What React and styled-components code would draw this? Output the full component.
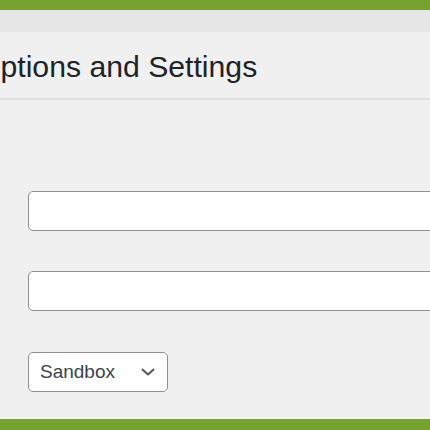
import React from "react";
import styled, { createGlobalStyle } from "styled-components";

const GlobalStyle = createGlobalStyle`
  html, body {
    margin: 0;
    padding: 0;
    background: #f0f0f1;
    overflow: hidden;
  }
  body {
    font-family: "Liberation Sans", Arial, sans-serif;
  }
`;

const Page = styled.div`
  height: 430px;
  display: flex;
  flex-direction: column;
  background: #f0f0f1;
`;

const GreenBar = styled.div`
  height: ${props => props.h}px;
  background: #77a22f;
  flex-shrink: 0;
`;

const AdminBar = styled.div`
  height: 22px;
  background: #e6e6e6;
  flex-shrink: 0;
`;

const Header = styled.div`
  padding: 15px 0 11px;
  border-bottom: 2px solid #e1e1e3;
  flex-shrink: 0;
  overflow: hidden;
`;

const Title = styled.h1`
  margin: 0 0 0 -23px;
  font-size: 30.2px;
  line-height: 40px;
  font-weight: 400;
  color: #1d2327;
  white-space: nowrap;
`;

const Form = styled.div`
  flex: 1;
  display: flex;
  flex-direction: column;
  align-items: flex-start;
  gap: 40px;
  padding: 91px 0 0 28px;
`;

const TextInput = styled.input`
  box-sizing: border-box;
  width: 520px;
  height: 40px;
  border: 1px solid #8c8f94;
  border-radius: 5px;
  background: #fff;
  font-size: 18px;
  padding: 0 12px;
  outline: none;
`;

const SelectBox = styled.div`
  box-sizing: border-box;
  width: 140px;
  height: 40px;
  margin-top: 1px;
  display: flex;
  align-items: center;
  justify-content: space-between;
  padding: 0 12px 0 11px;
  border: 1px solid #8c8f94;
  border-radius: 5px;
  background: #fff;
  font-size: 19px;
  color: #3c434a;
`;

const Chevron = () => (
  <svg width="14" height="8" viewBox="0 0 14 8" fill="none">
    <path d="M1.5 1.5 L7 6.5 L12.5 1.5" stroke="#50575e" strokeWidth="2" strokeLinecap="round" strokeLinejoin="round" />
  </svg>
);

export default function App() {
  return (
    <Page>
      <GlobalStyle />
      <GreenBar h={10} />
      <AdminBar />
      <Header>
        <Title>Options and Settings</Title>
      </Header>
      <Form>
        <TextInput type="text" />
        <TextInput type="text" />
        <SelectBox>
          <span>Sandbox</span>
          <Chevron />
        </SelectBox>
      </Form>
      <GreenBar h={11} />
    </Page>
  );
}
